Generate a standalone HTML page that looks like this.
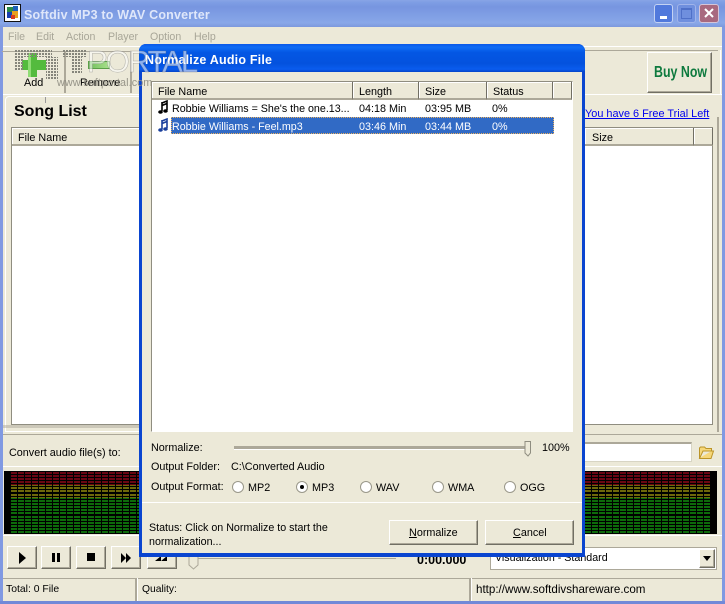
<!DOCTYPE html>
<html><head><meta charset="utf-8"><style>
html,body{margin:0;padding:0}
#w{position:relative;width:725px;height:604px;overflow:hidden;background:#ece9d8;font:10.8px/13px "Liberation Sans",sans-serif;color:#000}
#w div,#w span,#w svg{position:absolute}
.t{white-space:nowrap}
.btn{background:#ece9d8;border:1px solid;border-color:#fff #716f64 #716f64 #fff;box-shadow:inset -1px -1px 0 #aca899;box-sizing:border-box}
.hd{background:#ece9d8;border-right:1px solid #716f64;border-bottom:2px solid #aca899;box-shadow:inset 1px 1px 0 #fff;box-sizing:border-box;height:18px;padding:4px 0 0 6px;white-space:nowrap}
.ln{height:1px;background:#fff}
.sp{background-color:#000;overflow:hidden}
.sp i{position:absolute;display:block;top:1px;bottom:0;
background:repeating-linear-gradient(90deg,transparent 0 6px,#000 6px 7px),repeating-linear-gradient(180deg,transparent 0 2px,#000 2px 3px,transparent 3px 5px,#000 5px 6px,transparent 6px 8px,#000 8px 9px,transparent 9px 11px,#000 11px 12px,transparent 12px 14px,#000 14px 15px,transparent 15px 17px,#000 17px 18px,transparent 18px 20px,#000 20px 22px),linear-gradient(180deg,#6a0512 0 13px,#6e680a 13px 26px,#0d6a0a 26px)}
.rd{width:12px;height:12px;border-radius:50%;background:#fff;border:1px solid #9a988a;box-sizing:border-box}
.tb{width:30px;height:23px;top:546px}
</style></head><body><div id="w">

<!-- main title -->
<div style="left:0;top:0;width:725px;height:27px;background:linear-gradient(180deg,#88a4e6 0,#7f9ee4 8%,#7795e0 25%,#88a7e8 85%,#7d98dc 100%)"></div>
<div style="left:0;top:27px;width:3px;height:577px;background:#8099e2"></div>
<div style="left:722px;top:27px;width:3px;height:577px;background:#8099e2"></div>
<div style="left:0;top:601px;width:725px;height:3px;background:#7189d8"></div>
<svg style="left:4px;top:4px" width="17" height="18" viewBox="0 0 17 18"><rect x=".5" y=".5" width="16" height="17" fill="#fff" stroke="#111"/><rect x="3" y="3" width="6" height="5" fill="#2a8a4a"/><rect x="9" y="2" width="5" height="5" fill="#1d5fb8"/><rect x="3" y="8" width="6" height="6" fill="#1a3fb0"/><rect x="8" y="7" width="6" height="7" fill="#e8a020"/><rect x="7" y="11" width="4" height="4" fill="#d83a20"/></svg>
<div class="t" style="left:24px;top:7px;font:bold 12.5px/16px 'Liberation Sans',sans-serif;letter-spacing:.2px;color:#dfe7fa">Softdiv MP3 to WAV Converter</div>
<!-- window buttons -->
<div style="left:654px;top:4px;width:19px;height:19px;border:1px solid #c3d2f3;border-radius:3px;background:#5179dc;box-sizing:border-box"></div>
<div style="left:660px;top:16px;width:7px;height:3px;background:#fff"></div>
<div style="left:677px;top:4px;width:19px;height:19px;border:1px solid #a0b4ea;border-radius:3px;background:#6f8fde;box-sizing:border-box"></div>
<div style="left:681px;top:8px;width:11px;height:11px;border:1px solid #4f70c8;border-top-width:2px;box-sizing:border-box"></div>
<div style="left:699px;top:4px;width:20px;height:19px;border:1px solid #d5c5d8;border-radius:3px;background:#a8697f;box-sizing:border-box"></div>
<svg style="left:703px;top:7px" width="12" height="12"><path d="M2 2L10 10M10 2L2 10" stroke="#fff" stroke-width="2"/></svg>

<!-- menu -->
<div class="t" style="left:8px;top:31px;color:#a8a698;font-size:10.6px">File</div>
<div class="t" style="left:36px;top:31px;color:#a8a698;font-size:10.6px">Edit</div>
<div class="t" style="left:66px;top:31px;color:#a8a698;font-size:10.6px">Action</div>
<div class="t" style="left:108px;top:31px;color:#a8a698;font-size:10.6px">Player</div>
<div class="t" style="left:150px;top:31px;color:#a8a698;font-size:10.6px">Option</div>
<div class="t" style="left:194px;top:31px;color:#a8a698;font-size:10.6px">Help</div>

<!-- toolbar -->
<div class="ln" style="left:3px;top:46px;width:719px"></div>
<div class="ln" style="left:3px;top:94px;width:719px"></div>
<div style="left:2px;top:51px;width:64px;height:42px;border-right:2px solid #aca899;border-top:1px solid #aca899;box-sizing:border-box"></div>
<div style="left:66px;top:51px;width:66px;height:42px;border-right:2px solid #aca899;border-top:1px solid #aca899;box-sizing:border-box"></div>
<svg style="left:15px;top:48px" width="60" height="32"><rect x="13" y="5" width="9" height="24" fill="#54bb3e"/><rect x="7" y="12" width="24" height="10" fill="#54bb3e"/><rect x="13" y="5" width="3" height="24" fill="#8fdc74"/></svg>
<div style="left:88px;top:61px;width:22px;height:8px;background:linear-gradient(90deg,#72c05c,#a8e08c);border:1px solid #5aa048;box-sizing:border-box"></div>
<div class="t" style="left:24px;top:77px">Add</div>
<div class="t" style="left:80px;top:77px">Remove</div>

<div style="left:647px;top:52px;width:65px;height:41px" class="btn"></div>
<div class="t" style="left:654px;top:64px;font:bold 15.5px/18px 'Liberation Sans',sans-serif;color:#0e7a3e;transform:scaleX(.8);transform-origin:left">Buy Now</div>
<div style="left:572px;top:50px;width:148px;height:1px;background:#aca899"></div>
<div style="left:718px;top:50px;width:2px;height:44px;background:#ece9d8;border-right:1px solid #fff"></div>

<!-- song list panel -->
<div style="left:5px;top:96px;width:215px;height:336px;border:1px solid #fff;border-radius:4px 4px 0 0;box-sizing:border-box"></div>
<div style="left:45px;top:97px;width:1px;height:6px;background:#999"></div>
<div class="t" style="left:14px;top:102px;font:bold 16px/20px 'Liberation Sans',sans-serif">Song List</div>
<div style="left:11px;top:127px;width:140px;height:298px;background:#fff;border:1px solid #8f8d80;border-right:0;box-sizing:border-box"></div>
<div class="hd" style="left:12px;top:128px;width:130px">File Name</div>
<div style="left:3px;top:425px;width:140px;height:3px;background:#aca899;opacity:.5"></div>

<div class="t" style="left:585px;top:108px;color:#0000ee;text-decoration:underline;font-size:10.9px">You have 6 Free Trial Left</div>
<div style="left:585px;top:127px;width:128px;height:298px;background:#fff;border:1px solid #8f8d80;border-left:0;box-sizing:border-box"></div>
<div class="hd" style="left:585px;top:128px;width:109px;padding-left:7px">Size</div>
<div class="hd" style="left:694px;top:128px;width:19px"></div>
<div style="left:717px;top:117px;width:2px;height:315px;background:#aca899"></div>

<!-- convert row -->
<div style="left:3px;top:434px;width:719px;height:1px;background:#aca899"></div>
<div class="ln" style="left:3px;top:466px;width:719px"></div>
<div class="t" style="left:9px;top:447px">Convert audio file(s) to:</div>
<div style="left:580px;top:442px;width:112px;height:20px;background:#fff;border:1px solid #d8d5c4;border-top:2px solid #aca899;box-sizing:border-box"></div>
<svg style="left:698px;top:445px" width="17" height="15"><path d="M1.500 13V3L2.500 2H6.500L8 3.500H13.500V6H5L1.500 13.500H13L15.500 6H13.500" fill="#f6d77a" stroke="#bb9428"/></svg>

<!-- spectrum -->
<div class="sp" style="left:4px;top:471px;width:135px;height:63px"><i style="left:7px;right:0"></i></div>
<div class="sp" style="left:580px;top:471px;width:137px;height:63px"><i style="left:5px;right:7px"></i></div>
<div class="ln" style="left:3px;top:535px;width:719px"></div>

<!-- transport -->
<div class="btn tb" style="left:7px"></div>
<svg style="left:19px;top:552px" width="8" height="12"><path d="M0 0L7 6L0 12z" fill="#000"/></svg>
<div class="btn tb" style="left:41px"></div>
<div style="left:52px;top:553px;width:3px;height:9px;background:#000"></div>
<div style="left:57px;top:553px;width:3px;height:9px;background:#000"></div>
<div class="btn tb" style="left:76px"></div>
<div style="left:87px;top:553px;width:8px;height:8px;background:#000"></div>
<div class="btn tb" style="left:111px"></div>
<svg style="left:120px;top:552px" width="12" height="12"><path d="M1 1L6 6L1 11zM6 1L11 6L6 11z" fill="#000"/></svg>
<div class="btn tb" style="left:147px"></div>
<svg style="left:155px;top:556px" width="12" height="6"><path d="M6 0L0 5H6zM12 0L6 5H12z" fill="#000"/></svg>
<div style="left:190px;top:558px;width:206px;height:1px;background:#aca899"></div>
<svg style="left:188px;top:556px" width="12" height="14"><path d="M1 0H10V9L5.500 13L1 9z" fill="#ece9d8" stroke="#aca899"/></svg>
<div class="t" style="left:417px;top:553px;font:bold 12.500px/15px 'Liberation Sans',sans-serif">0:00.000</div>
<div style="left:490px;top:547px;width:227px;height:23px;background:#fff;border:1px solid #aca899;box-sizing:border-box"></div>
<div class="t" style="left:495px;top:552px;font-size:10.7px">Visualization - Standard</div>
<div class="btn" style="left:699px;top:549px;width:16px;height:19px"></div>
<svg style="left:702px;top:556px" width="10" height="5"><path d="M1 0H9L5 5z" fill="#000"/></svg>

<!-- status bar -->
<div style="left:3px;top:578px;width:719px;height:1px;background:#aca899"></div>
<div style="left:135px;top:578px;width:2px;height:23px;background:#aca899;border-right:1px solid #fff"></div>
<div style="left:469px;top:578px;width:2px;height:23px;background:#aca899;border-right:1px solid #fff"></div>
<div class="t" style="left:6px;top:583px;font-size:10.4px">Total: 0 File</div>
<div class="t" style="left:142px;top:583px;font-size:10.3px">Quality:</div>
<div class="t" style="left:476px;top:583px;font-size:11.6px">http://www.softdivshareware.com</div>

<!-- dialog -->
<div style="left:139px;top:44px;width:446px;height:513px;background:#0a45d0;border-radius:7px 7px 0 0"></div>
<div style="left:139px;top:44px;width:446px;height:28px;border-radius:7px 7px 0 0;background:linear-gradient(180deg,#0a58e8 0,#0f6cf5 12%,#0457e4 30%,#0452de 70%,#0a5cee 90%,#0444c8 100%)"></div>
<div class="t" style="left:145px;top:52px;font:bold 12.5px/16px 'Liberation Sans',sans-serif;letter-spacing:.2px;color:#fff">Normalize Audio File</div>
<div style="left:142px;top:72px;width:440px;height:481px;background:#ece9d8"></div>

<!-- dialog list -->
<div style="left:151px;top:81px;width:422px;height:351px;background:#fff;border:1px solid #8f8d80;border-right-color:#fff;border-bottom-color:#fff;box-sizing:border-box"></div>
<div class="hd" style="left:152px;top:82px;width:201px">File Name</div>
<div class="hd" style="left:353px;top:82px;width:66px">Length</div>
<div class="hd" style="left:419px;top:82px;width:68px">Size</div>
<div class="hd" style="left:487px;top:82px;width:66px">Status</div>
<div class="hd" style="left:553px;top:82px;width:19px"></div>
<svg style="left:158px;top:100px" width="11" height="15"><path d="M4 2V11M4 3L9 1V10M4 5.500L9 3.500" stroke="#000" stroke-width="1.600" fill="none"/><ellipse cx="2.500" cy="12" rx="2.300" ry="1.800" fill="#000"/><ellipse cx="7.500" cy="11" rx="2.300" ry="1.800" fill="#000"/></svg>
<svg style="left:158px;top:118px" width="11" height="15"><path d="M4 2V11M4 3L9 1V10M4 5.500L9 3.500" stroke="#1a3f9c" stroke-width="1.600" fill="none"/><ellipse cx="2.500" cy="12" rx="2.300" ry="1.800" fill="#1a3f9c"/><ellipse cx="7.500" cy="11" rx="2.300" ry="1.800" fill="#1a3f9c"/></svg>
<div class="t" style="left:172px;top:103px;font-size:10.7px">Robbie Williams = She's the one.13...</div>
<div class="t" style="left:359px;top:103px">04:18 Min</div>
<div class="t" style="left:425px;top:103px">03:95 MB</div>
<div class="t" style="left:492px;top:103px">0%</div>
<div style="left:171px;top:117px;width:383px;height:17px;background:#316ac5;outline:1px dotted #e8b060;outline-offset:-1px"></div>
<div class="t" style="left:172px;top:121px;color:#fff;font-size:10.7px">Robbie Williams - Feel.mp3</div>
<div class="t" style="left:359px;top:121px;color:#fff">03:46 Min</div>
<div class="t" style="left:425px;top:121px;color:#fff">03:44 MB</div>
<div class="t" style="left:492px;top:121px;color:#fff">0%</div>

<!-- dialog controls -->
<div class="t" style="left:151px;top:442px">Normalize:</div>
<div style="left:234px;top:446px;width:293px;height:3px;background:#aca899;border-bottom:1px solid #fff"></div>
<svg style="left:524px;top:441px" width="8" height="16"><path d="M1 .5H6.500V12L4 15L1 12z" fill="#ece9d8" stroke="#8f8d80"/></svg>
<div class="t" style="left:542px;top:442px">100%</div>
<div class="t" style="left:151px;top:461px">Output Folder:</div>
<div class="t" style="left:231px;top:461px">C:\Converted Audio</div>
<div class="t" style="left:151px;top:481px">Output Format:</div>
<div class="rd" style="left:232px;top:481px"></div><div class="t" style="left:248px;top:482px">MP2</div>
<div class="rd" style="left:296px;top:481px"></div><div style="left:300px;top:485px;width:4px;height:4px;border-radius:50%;background:#000"></div><div class="t" style="left:312px;top:482px">MP3</div>
<div class="rd" style="left:360px;top:481px"></div><div class="t" style="left:376px;top:482px">WAV</div>
<div class="rd" style="left:432px;top:481px"></div><div class="t" style="left:448px;top:482px">WMA</div>
<div class="rd" style="left:504px;top:481px"></div><div class="t" style="left:520px;top:482px">OGG</div>
<div class="ln" style="left:142px;top:502px;width:440px"></div>
<div class="t" style="left:149px;top:522px;font-size:10.7px">Status: Click on Normalize to start the</div>
<div class="t" style="left:149px;top:536px;font-size:10.7px">normalization...</div>
<div class="btn" style="left:389px;top:520px;width:89px;height:25px"></div>
<div class="t" style="left:409px;top:527px"><u>N</u>ormalize</div>
<div class="btn" style="left:485px;top:520px;width:89px;height:25px"></div>
<div class="t" style="left:513px;top:527px"><u>C</u>ancel</div>

<!-- watermark on top -->
<svg style="left:15px;top:50px" width="73" height="32"><defs><pattern id="d" width="3" height="3" patternUnits="userSpaceOnUse"><rect width="2" height="2" fill="#85857b"/></pattern></defs><path d="M0 0H37V7H9V20H0zM31 7H43V29H31zM47 0H72V7H67V23H57V7H47z" fill="url(#d)"/></svg>
<div class="t" style="left:87px;top:44px;font:31px/36px 'Liberation Sans',sans-serif;letter-spacing:-2px;color:rgba(255,255,255,.55);-webkit-text-stroke:.5px rgba(120,120,120,.55)">PORTAL</div>
<div class="t" style="left:57px;top:77px;color:#8d8b80;font-size:10.8px;letter-spacing:.1px;opacity:.9">www.softportal.com</div>

</div></body></html>
